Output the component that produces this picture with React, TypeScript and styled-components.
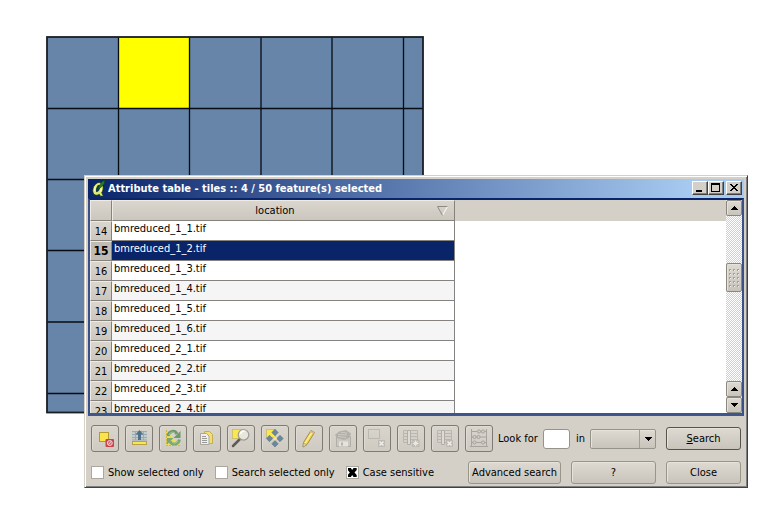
import React from 'react';
import styled, { createGlobalStyle, css } from 'styled-components';

const FACE = '#d4d0c8';
const NAVY = '#0a246a';

const GlobalStyle = createGlobalStyle`
  * { box-sizing: border-box; }
  html, body, #root { height: 100%; }
  body { margin: 0; background: #fff; }
  body, button, input, select {
    font-family: 'DejaVu Sans Condensed', 'DejaVu Sans', sans-serif;
    font-size: 11px;
    color: #000;
  }
`;

const Desktop = styled.main`
  position: relative;
  min-height: 100%;
  overflow: hidden;
  padding: 36px 0 0 46px;
`;

const MapCanvas = styled.svg`
  display: block;
  width: 378px;
  height: 378px;
`;

const Window = styled.section`
  position: absolute;
  top: 175px;
  left: 84px;
  right: 25px;
  display: flex;
  flex-direction: column;
  padding: 2px;
  background: ${FACE};
  border: 1px solid;
  border-color: ${FACE} #404040 #404040 ${FACE};
  box-shadow: inset 1px 1px #fff, inset -1px -1px #808080;
`;

const TitleBar = styled.header`
  display: flex;
  align-items: center;
  height: 19px;
  margin: 1px 1px 0;
  padding: 0 2px 1px 4px;
  color: #fff;
  background: linear-gradient(90deg, ${NAVY}, #a6caf0 92%);
`;

const Title = styled.h1`
  flex: 1;
  margin: 0;
  font-size: 11px;
  font-weight: bold;
  white-space: nowrap;
`;

const CaptionButtons = styled.div`
  display: flex;
`;

const CaptionButton = styled.button<{ $apart?: boolean }>`
  display: grid;
  place-items: center;
  width: 16px;
  height: 14px;
  margin-left: ${(p) => (p.$apart ? '2px' : '0')};
  padding: 0;
  background: ${FACE};
  border: 1px solid;
  border-color: #fff #404040 #404040 #fff;
  box-shadow: inset -1px -1px #808080;
`;

const TableFrame = styled.div`
  display: flex;
  height: 218px;
  margin: 0 1px;
  border: 2px solid #3a5087;
  border-bottom-width: 3px;
  border-bottom-color: #3f568d;
  border-top-color: ${NAVY};
  background: #fff;
`;

const TableView = styled.div`
  flex: 1;
  overflow: hidden;
  background: linear-gradient(${FACE} 21px, #fff 21px);
`;

const Table = styled.table`
  width: 365px;
  table-layout: fixed;
  border-collapse: separate;
  border-spacing: 0;
`;

const headerFace = css`
  background: linear-gradient(#dad6ce, #cbc7be);
  border: 1px solid;
  border-color: #eeebe5 #85827b #85827b #eeebe5;
`;

const ColumnHeader = styled.th<{ $corner?: boolean }>`
  ${headerFace}
  width: ${(p) => (p.$corner ? '22px' : 'auto')};
  height: 21px;
  padding: 0 6px 0 0;
  font-weight: normal;
`;

const HeaderLabel = styled.div`
  display: flex;
  align-items: center;
  justify-content: space-between;
  &::before { content: ''; width: 0; }
`;

const RowHeader = styled.th<{ $selected?: boolean }>`
  ${headerFace}
  height: 20px;
  padding: 2px 0 1px;
  line-height: 15px;
  font-weight: ${(p) => (p.$selected ? 'bold' : 'normal')};
  ${(p) => p.$selected && 'background: #c0bcb3; font-size: 12px;'}
`;

const Cell = styled.td<{ $selected?: boolean; $alternate?: boolean }>`
  height: 20px;
  padding: 0 2px 4px;
  line-height: 15px;
  border-right: 1px solid #85827f;
  border-bottom: 1px solid #85827f;
  color: ${(p) => (p.$selected ? '#fff' : '#000')};
  background: ${(p) => (p.$selected ? NAVY : p.$alternate ? '#f5f5f5' : '#fff')};
`;

const ScrollBar = styled.div`
  display: flex;
  flex-direction: column;
  width: 16px;
  background: repeating-conic-gradient(${FACE} 0 25%, #fff 0 50%) 0 0 / 2px 2px;
`;

const raised = css`
  padding: 0;
  background: linear-gradient(#dedad2, #c8c4bb);
  border: 1px solid #8a877f;
  border-radius: 2px;
  box-shadow: inset 1px 1px #e6e3dc;
`;

const ScrollButton = styled.button`
  ${raised}
  display: grid;
  place-items: center;
  height: 16px;
  flex: none;
`;

const Track = styled.div`
  flex: 1;
  padding-top: 47px;
`;

const Thumb = styled.div`
  ${raised}
  display: grid;
  place-items: center;
  height: 29px;
`;

const Controls = styled.form`
  display: flex;
  flex-direction: column;
  padding: 9px 4px 1px;
  gap: 9px;
`;

const ControlRow = styled.div`
  display: flex;
  align-items: center;
  justify-content: space-between;
  gap: 10px;
  white-space: nowrap;
`;

const Tools = styled.div`
  display: flex;
  gap: 6px;
`;

const ToolButton = styled.button`
  width: 28px;
  height: 27px;
  padding: 0;
  background: linear-gradient(#d9d5cd, #cfcbc3);
  border: 1px solid #7e7b74;
  border-radius: 3px;
  box-shadow: inset 1px 1px #dedbd4;
  svg { display: block; }
`;

const SearchFields = styled.div`
  display: flex;
  flex: 1;
  align-items: center;
  margin-left: -5px;
`;

const FieldLabel = styled.label`
  margin-right: 5px;
`;

const TextBox = styled.input`
  width: 27px;
  height: 20px;
  margin-right: 6px;
  border: 1px solid #96938b;
  border-radius: 3px;
  background: #fff;
`;

const SelectBox = styled.div`
  display: grid;
  flex: 1;
  min-width: 60px;
  grid-template-columns: 1fr 17px;
  align-items: center;
`;

const Select = styled.select`
  ${raised}
  grid-area: 1 / 1 / 2 / 3;
  height: 20px;
  appearance: none;
  border-color: #96938b;
`;

const SelectArrow = styled.span`
  grid-area: 1 / 2;
  display: grid;
  place-items: center;
  height: 18px;
  border-left: 1px solid #a19e96;
  pointer-events: none;
`;

const PushButton = styled.button<{ $width: number; $default?: boolean }>`
  ${raised}
  width: ${(p) => p.$width}px;
  height: 23px;
  border-color: ${(p) => (p.$default ? '#55534e' : '#989589')};
  border-radius: 3px;
`;

const Checks = styled.div`
  display: flex;
  flex: 1;
  gap: 11px;
`;

const CheckLabel = styled.label`
  display: flex;
  align-items: center;
  gap: 4px;
`;

const CheckBox = styled.input`
  display: grid;
  place-items: center;
  width: 13px;
  height: 13px;
  margin: 0;
  appearance: none;
  background: #fff;
  border: 1px solid #aaa79f;
  &:checked::before {
    content: '';
    width: 9px;
    height: 9px;
    background: #000;
    clip-path: polygon(0 0, 35% 0, 50% 22%, 65% 0, 100% 0, 100% 22%, 76% 50%, 100% 78%, 100% 100%, 65% 100%, 50% 78%, 35% 100%, 0 100%, 0 78%, 24% 50%, 0 22%);
  }
`;

const Arrow = ({ down = false }: { down?: boolean }) => (
  <svg width="7" height="4" shapeRendering="crispEdges">
    <path d={down ? 'M0 0h7v1h-1v1h-1v1h-1v1h-1v-1h-1v-1h-1v-1h-1z' : 'M0 4h7v-1h-1v-1h-1v-1h-1v-1h-1v1h-1v1h-1v1h-1z'} />
  </svg>
);

const Logo = () => (
  <svg width="16" height="17" viewBox="0 0 16 17">
    <path d="M5 3C1.500 5 -.2 10 1.200 13c1 2.500 4 2.800 6 1.300l1.300 2 3-.4-1.800-3.200C12 9.500 11.500 5.500 9.500 3.500 8.300 2.300 6.500 2.200 5 3z" fill="#dcec6c" stroke="#16301d" strokeWidth=".8" />
    <path d="M6 5C4.200 7 3.400 10 4.200 12c1.200.6 2.500-.6 3.300-2.400.8-1.800.8-3.800 0-4.600z" fill="#17394a" />
    <path d="M6 8.500L9.500 2l3.500-2-.8 4-4 4z" fill="#267a2c" stroke="#0c3e1b" strokeWidth=".6" />
    <path d="M3.200 6.500L2.500 11M9.500 8.500l-1 3" stroke="#fcffb5" strokeWidth="1.300" />
  </svg>
);

const Diamond = ({ x, y }: { x: number; y: number }) => (
  <path d={`M${x - 3.200} ${y}l3.200-3.200 3.200 3.200-3.200 3.200z`} fill="#6b8799" stroke="#5b7687" strokeWidth=".6" />
);

const CrossBadge = () => (
  <g>
    <rect x="15" y="15" width="7" height="7" fill="#bdbab3" />
    <path d="M16.500 16.500l4 4m0-4l-4 4" stroke="#f0eee9" strokeWidth="1.500" />
  </g>
);

const DimTable = () => (
  <g fill="none" stroke="#b9b6af">
    <path d="M6.500 5.500h14v12h-14z" />
    <path d="M7 8.500h4M7 11.500h4M7 14.500h4M14 8.500h6M14 11.500h6M14 14.500h6" />
    <path d="M10.500 5.500h3v14h-3z" fill="#dedbd5" stroke="#b1aea7" />
  </g>
);

const icons: { name: string; art: React.ReactNode; dim?: boolean }[] = [
  {
    name: 'Unselect all',
    art: (
      <g>
        <rect x="8.500" y="7.500" width="9" height="9" fill="#fbe44b" stroke="#b39a35" />
        <rect x="14.500" y="14" width="8.500" height="8" rx="1" fill="#c9444a" />
        <circle cx="18.800" cy="18" r="2.500" fill="#d9696e" stroke="#f4d0d0" />
        <path d="M17 19.800l3.600-3.600" stroke="#f4d0d0" />
      </g>
    ),
  },
  {
    name: 'Move selection to top',
    art: (
      <g>
        <path d="M7 6h15v9.500H7z" fill="#c3cccd" />
        <path d="M7 6.500h15M7 9.500h15M7 12.500h15M7 15h15M10.500 6v9M18.500 6v9" stroke="#9fabae" />
        <path d="M14.500 5l-4 4.500h2.500v5.500h3V9.500h2.500z" fill="#4f7189" />
        <rect x="7.500" y="16.500" width="14" height="3" fill="#fae750" stroke="#b7a24b" />
      </g>
    ),
  },
  {
    name: 'Invert selection',
    art: (
      <g>
        <path d="M7 5v16h15z" fill="#f0dc59" />
        <path d="M7.500 5v15.500h14" fill="none" stroke="#cbb54c" strokeDasharray="2 1" />
        <path d="M9 11c1-5.500 7-6 9-2" fill="none" stroke="#6a9c6b" strokeWidth="3" />
        <path d="M21.500 6v7h-7z" fill="#6a9c6b" />
        <path d="M20.500 14.500c-1 5-7 6-9.500 2" fill="none" stroke="#77a876" strokeWidth="3" />
        <path d="M8 19.500V13h6.500z" fill="#77a876" />
        <path d="M10 10c1-3 4-3.500 6-2M19 16c-1 2-4 3-6 1" fill="none" stroke="#b5d0ad" strokeWidth=".8" />
      </g>
    ),
  },
  {
    name: 'Copy selected rows',
    art: (
      <g>
        <path d="M11.500 6.500h5l3 3v9h-8z" fill="#f1df76" stroke="#c3ae54" />
        <path d="M7.500 8.500h6l2.500 2.500v8.500H7.500z" fill="#f0efeb" stroke="#aaa79f" />
        <path d="M9 11.500h4M9 13.500h5M9 15.500h5M9 17.500h5" stroke="#999a97" />
      </g>
    ),
  },
  {
    name: 'Zoom map to selected rows',
    art: (
      <g>
        <rect x="5.500" y="4.500" width="10" height="9" fill="#fbe74e" stroke="#b8a644" strokeDasharray="1 1" />
        <path d="M13 14l-7 7" stroke="#5d5b56" strokeWidth="2.500" strokeLinecap="round" />
        <circle cx="16.500" cy="9.800" r="5.300" fill="#e9e9e1" fillOpacity=".9" stroke="#9d9b94" strokeWidth="1.200" />
        <path d="M13.500 9c.5-2 2-3 4-2.500" stroke="#fff" strokeWidth="1.500" fill="none" />
      </g>
    ),
  },
  {
    name: 'Pan map to selected rows',
    art: (
      <g>
        <rect x="5.500" y="4.500" width="9" height="8" fill="#fbe74e" stroke="#b8a644" strokeDasharray="1 1" />
        <Diamond x={14} y={7.500} />
        <Diamond x={8.500} y={13.500} />
        <Diamond x={19} y={13.500} />
        <Diamond x={14} y={18.800} />
        <path d="M12 13.500l2-2 2 2-2 2z" fill="#efe6a2" />
      </g>
    ),
  },
  {
    name: 'Toggle editing mode',
    art: (
      <g strokeLinejoin="round">
        <path d="M16 5.500l3.500 2-7.500 12-4 2.500.5-4.500z" fill="#f0d655" stroke="#a28f49" />
        <path d="M17.200 7l-7.200 11.500" stroke="#fff1a0" strokeWidth="1.200" />
        <path d="M8.500 18l3 1.700-3.500 2.300z" fill="#e8d9bd" stroke="#8f846a" strokeWidth=".5" />
        <path d="M16 5.500l3.500 2-1 1.500-3.500-2z" fill="#d8b5a0" />
      </g>
    ),
  },
  {
    name: 'Save edits',
    dim: true,
    art: (
      <g>
        <path d="M7.500 11.500h14v10h-14z" fill="#cbc8c1" stroke="#b1aea7" />
        <path d="M10 16.500h9v5h-9z" fill="#e6e3dd" />
        <path d="M12 17.500h2v3h-2z" fill="#b5b2ab" />
        <path d="M6 10l4-3.500L17 5l5 3.500-2 4.500-5 2-7-2z" fill="#b3b0a9" />
        <path d="M9 9.500l9 .5M9 11.500l8 1M12 7.500l6 .5" stroke="#cdcac3" />
      </g>
    ),
  },
  {
    name: 'Delete selected features',
    dim: true,
    art: (
      <g>
        <rect x="5.500" y="4.500" width="11" height="9" fill="none" stroke="#a19e97" strokeDasharray="1 1" />
        <CrossBadge />
      </g>
    ),
  },
  {
    name: 'New column',
    dim: true,
    art: (
      <g>
        <DimTable />
        <rect x="15" y="14.500" width="7.500" height="7.500" fill="#bdbab3" />
        <path d="M18.700 15.300v6M15.700 18.300h6M16.700 16.300l4 4M20.700 16.300l-4 4" stroke="#f0eee9" />
      </g>
    ),
  },
  {
    name: 'Delete column',
    dim: true,
    art: (
      <g>
        <DimTable />
        <CrossBadge />
      </g>
    ),
  },
  {
    name: 'Open field calculator',
    dim: true,
    art: (
      <g fill="#d0cdc6" stroke="#a7a49d">
        <path d="M6.500 4v18M21.500 4v18M5 21.500h18M6 6.500h15M6 12h15M6 17.500h15" fill="none" />
        <circle cx="14" cy="6.500" r="1.600" />
        <circle cx="18" cy="6.500" r="1.600" />
        <circle cx="9.500" cy="12" r="1.600" />
        <circle cx="13.500" cy="12" r="1.600" />
        <circle cx="9.500" cy="17.500" r="1.600" />
        <circle cx="18" cy="17.500" r="1.600" />
      </g>
    ),
  },
];

const rows = [
  [14, 'bmreduced_1_1.tif'],
  [15, 'bmreduced_1_2.tif'],
  [16, 'bmreduced_1_3.tif'],
  [17, 'bmreduced_1_4.tif'],
  [18, 'bmreduced_1_5.tif'],
  [19, 'bmreduced_1_6.tif'],
  [20, 'bmreduced_2_1.tif'],
  [21, 'bmreduced_2_2.tif'],
  [22, 'bmreduced_2_3.tif'],
  [23, 'bmreduced_2_4.tif'],
] as const;

const columnLines = [72.500, 143.500, 215, 286, 357.500];
const rowLines = [72.500, 143.500, 214.500, 286, 357.500];

const Check = ({ label, checked }: { label: string; checked?: boolean }) => (
  <CheckLabel>
    <CheckBox type="checkbox" defaultChecked={checked} />
    {label}
  </CheckLabel>
);

export default function App() {
  return (
    <Desktop>
      <GlobalStyle />
      <MapCanvas viewBox="0 0 378 378" role="img" aria-label="Tile map">
        <rect x="1" y="1" width="376" height="376" fill="#6785a9" />
        <rect x="72" y="1" width="72" height="72" fill="#ff0" />
        {columnLines.map((x) => (
          <path key={x} d={`M${x} 1V376`} stroke="#060c12" strokeWidth="1.300" />
        ))}
        {rowLines.map((y) => (
          <path key={y} d={`M1 ${y}H377`} stroke="#060c12" strokeWidth="1.300" />
        ))}
        <rect x="1" y="1" width="376" height="375.500" fill="none" stroke="#181e24" strokeWidth="1.800" />
      </MapCanvas>

      <Window aria-label="Attribute table">
        <TitleBar>
          <Logo />
          <Title>Attribute table - tiles :: 4 / 50 feature(s) selected</Title>
          <CaptionButtons>
            <CaptionButton aria-label="Minimize">
              <svg width="12" height="10" shapeRendering="crispEdges"><path d="M2 7h6v2H2z" /></svg>
            </CaptionButton>
            <CaptionButton aria-label="Maximize">
              <svg width="12" height="10" shapeRendering="crispEdges"><path d="M1 0h9v9H1zM2 2v6h7V2z" fillRule="evenodd" /></svg>
            </CaptionButton>
            <CaptionButton aria-label="Close window" $apart>
              <svg width="12" height="10" shapeRendering="crispEdges">
                <path d="M2 1h2v1h1v1h2v-1h1v-1h2v1h-1v1h-1v1h-1v1h1v1h1v1h1v1h-2v-1h-1v-1h-2v1h-1v1h-2v-1h1v-1h1v-1h1v-1h-1v-1h-1v-1h-1z" />
              </svg>
            </CaptionButton>
          </CaptionButtons>
        </TitleBar>

        <TableFrame>
          <TableView>
            <Table>
              <thead>
                <tr>
                  <ColumnHeader $corner />
                  <ColumnHeader scope="col">
                    <HeaderLabel>
                      location
                      <svg width="11" height="10">
                        <path d="M10.500 .5L5.500 9.500" stroke="#fff" />
                        <path d="M5.500 9.500L.5 .5h10" fill="none" stroke="#8d8a83" />
                      </svg>
                    </HeaderLabel>
                  </ColumnHeader>
                </tr>
              </thead>
              <tbody>
                {rows.map(([id, file]) => {
                  const selected = id === 15;
                  return (
                    <tr key={id}>
                      <RowHeader scope="row" $selected={selected}>{id}</RowHeader>
                      <Cell $selected={selected} $alternate={id % 2 === 1}>{file}</Cell>
                    </tr>
                  );
                })}
              </tbody>
            </Table>
          </TableView>
          <ScrollBar>
            <ScrollButton aria-label="Scroll up"><Arrow /></ScrollButton>
            <Track>
              <Thumb>
                <svg width="12" height="20" shapeRendering="crispEdges">
                  {[0, 4, 8, 12, 16].map((y) =>
                    [1, 5, 9].map((x) => (
                      <g key={`${x}-${y}`}>
                        <rect x={x} y={y + 1} width="2" height="2" fill="#f5f3ef" />
                        <path d={`M${x} ${y + 1}h2v1h-1v1h-1z`} fill="#a19e97" />
                      </g>
                    )),
                  )}
                </svg>
              </Thumb>
            </Track>
            <ScrollButton aria-label="Scroll page up"><Arrow /></ScrollButton>
            <ScrollButton aria-label="Scroll down"><Arrow down /></ScrollButton>
          </ScrollBar>
        </TableFrame>

        <Controls onSubmit={(e) => e.preventDefault()}>
          <ControlRow>
            <Tools>
              {icons.map(({ name, art, dim }) => (
                <ToolButton key={name} type="button" aria-label={name} aria-disabled={dim}>
                  <svg width="26" height="25" viewBox="1 1 26 25">{art}</svg>
                </ToolButton>
              ))}
            </Tools>
            <SearchFields>
              <FieldLabel htmlFor="query">Look for</FieldLabel>
              <TextBox id="query" type="text" />
              <FieldLabel htmlFor="column">in</FieldLabel>
              <SelectBox>
                <Select id="column"><option value="" /></Select>
                <SelectArrow><Arrow down /></SelectArrow>
              </SelectBox>
            </SearchFields>
            <PushButton $width={75} $default><u>S</u>earch</PushButton>
          </ControlRow>
          <ControlRow>
            <Checks>
              <Check label="Show selected only" />
              <Check label="Search selected only" />
              <Check label="Case sensitive" checked />
            </Checks>
            <PushButton type="button" $width={93}>Advanced search</PushButton>
            <PushButton type="button" $width={85}>?</PushButton>
            <PushButton type="button" $width={75}>Close</PushButton>
          </ControlRow>
        </Controls>
      </Window>
    </Desktop>
  );
}
